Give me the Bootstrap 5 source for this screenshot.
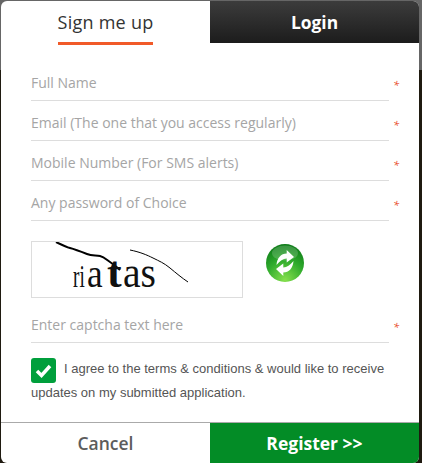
<!DOCTYPE html>
<html lang="en"><head><meta charset="utf-8">
<link href="https://cdn.jsdelivr.net/npm/bootstrap@5.3.0/dist/css/bootstrap.min.css" rel="stylesheet">
<style>
html,body{height:100%;margin:0;overflow:hidden}
body{background:linear-gradient(#666 0 70px,#1f1a10 70px);font-family:"Open Sans",sans-serif}
.shell{width:418px;height:462px;margin:1px 0 0 1px;background:#fff;border-radius:6px;overflow:hidden;display:flex;flex-direction:column}
.tabs{height:42px}
.tabs>div{width:50%;display:flex;justify-content:center}
.tab-on{color:#333;font-size:18px;font-weight:500;letter-spacing:.25px}
.tab-on span{display:block;height:44px;line-height:42px;border-bottom:3px solid #f15a29}
.tab-off{background:linear-gradient(#3c3c3c,#1c1c1c);color:#fff;font-size:17.400px;font-weight:700;line-height:42px}
.formarea{flex:1;padding:18px 0 0 30px}
.fld{width:358px;height:40px;border-bottom:1px solid #ddd;position:relative;display:flex;align-items:center;font-size:14px;color:#a5a5a5;padding-top:3px}
.fld-gap{margin-top:5px}
.star{position:absolute;left:362px;top:18px;color:#e8472a;font-size:11px;line-height:1}
.capbox{width:212px;height:57px;border:1px solid #ddd}
.capbox svg{display:block}
.capwrap{margin-top:20px;gap:22px}
.refresh{margin-top:2px}
.agree{font-family:"Liberation Sans",sans-serif;font-size:13px;line-height:24px;color:#555;width:360px;margin-top:14px}
.tick{float:left;width:25px;height:25px;border-radius:3px;background:#009f3c;margin:1px 8px -6px 0}
.tick svg{display:block}
.foot{height:41px;border-top:1px solid #aaa}
.foot>div{width:50%;display:flex;align-items:center;justify-content:center;font-size:17.500px}
.cnl{color:#5c5c5c;font-weight:600}
.reg{background:#038c26;color:#fff;font-weight:700}
</style></head><body>
<div class="shell">
<div class="tabs d-flex">
<div class="tab-on"><span>Sign me up</span></div>
<div class="tab-off">Login</div>
</div>
<div class="formarea">
<div class="fld">Full Name<i class="star">*</i></div>
<div class="fld">Email (The one that you access regularly)<i class="star">*</i></div>
<div class="fld">Mobile Number (For SMS alerts)<i class="star">*</i></div>
<div class="fld">Any password of Choice<i class="star">*</i></div>
<div class="d-flex align-items-start capwrap">
<div class="capbox"><svg width="210" height="55" viewBox="0 0 210 55">
<path d="M24 0C30 3 34 5 38 6S50 10 55 12 64 13 68 14 75 18 78 20 85 25 88 28" fill="none" stroke="#000" stroke-width="2"/>
<path d="M98 8C108 10 115 13 121 16S132 21 138 26 150 36 156 40" fill="none" stroke="#000" stroke-width="1"/>
<g font-family="Liberation Serif" fill="#111">
<text transform="translate(41 45) scale(.6 1)" font-size="32">ri</text>
<text transform="translate(55 45) scale(.88 1)" font-size="40">a</text>
<text transform="translate(75 45)" font-size="44" font-weight="700">t</text>
<text transform="translate(91 45) scale(.9 1)" font-size="44">as</text>
</g>
</svg></div>
<svg class="refresh" width="40" height="40" viewBox="0 0 40 40"><defs><radialGradient id="g" cx=".5" cy=".95" r=".95"><stop offset="0" stop-color="#86e04e"/><stop offset=".55" stop-color="#2fab2c"/><stop offset="1" stop-color="#0d7a18"/></radialGradient></defs>
<circle cx="20" cy="20" r="19" fill="url(#g)"/><ellipse cx="20" cy="10" rx="13" ry="7.500" fill="#fff" fill-opacity=".18"/>
<path d="M11.500 22C12 15 16 10.500 21.700 10.500V7L29 14 21.700 19.500V15.500C18 15.500 15 18 11.500 22Z" fill="#fff"/>
<path d="M11.500 22C12 15 16 10.500 21.700 10.500V7L29 14 21.700 19.500V15.500C18 15.500 15 18 11.500 22Z" fill="#fff" transform="rotate(180 20 20)"/></svg>
</div>
<div class="fld fld-gap">Enter captcha text here<i class="star">*</i></div>
<div class="agree"><span class="tick"><svg width="25" height="25" viewBox="0 0 25 25"><path d="M6 13l4.500 4.500L19 8" fill="none" stroke="#fff" stroke-width="3.500"/></svg></span> I agree to the terms &amp; conditions &amp; would like to receive updates on my submitted application.</div>
</div>
<div class="foot d-flex">
<div class="cnl">Cancel</div>
<div class="reg">Register &gt;&gt;</div>
</div>
</div>
</body></html>
